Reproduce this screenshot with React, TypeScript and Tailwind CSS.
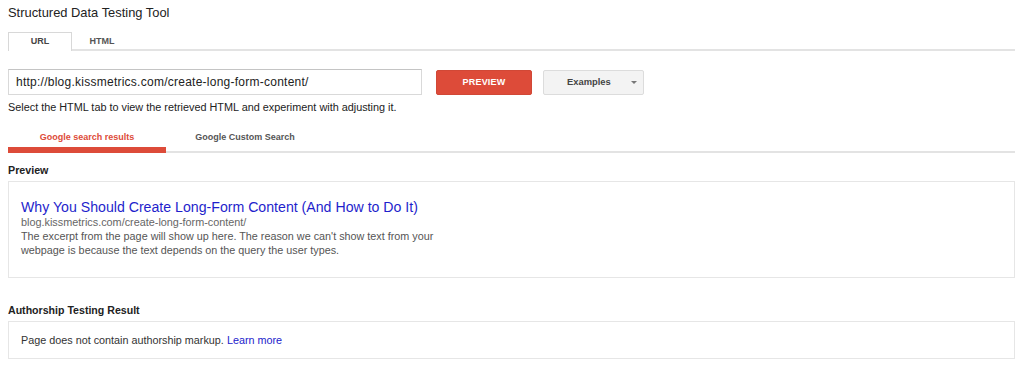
import React from "react";

export default function App() {
  return (
    <div
      className="w-[1024px] h-[373px] overflow-hidden bg-white pl-2 pr-[9px] text-[#222]"
      style={{ fontFamily: '"Liberation Sans", Arial, sans-serif' }}
    >
      {/* Title */}
      <div className="pt-[5px] text-[12.9px] leading-[16px] text-[#222]">
        Structured Data Testing Tool
      </div>

      {/* Top tabs */}
      <div className="mt-[11px] flex h-[19px] items-start border-b-2 border-[#e3e3e3]">
        <div className="-mb-[2px] flex h-[19px] w-[64px] items-center justify-center border border-b-0 border-[#d8d8d8] bg-white text-[9px] font-bold text-[#444]">
          URL
        </div>
        <div className="flex h-[17px] w-[60px] items-center justify-center pt-[2px] text-[9px] font-bold text-[#555]">
          HTML
        </div>
      </div>

      {/* Input row */}
      <div className="mt-[18px] flex items-start">
        <div className="flex h-[26px] w-[414px] items-center border border-[#d9d9d9] border-t-[#c4c4c4] pl-[7px] text-[12px] tracking-[0.25px] text-[#222]">
          http://blog.kissmetrics.com/create-long-form-content/
        </div>
        <div className="ml-[14px] mt-[1px] flex h-[25px] w-[96px] items-center justify-center rounded-[2px] border border-[#d14836] bg-[#dd4b39] text-[9px] font-bold tracking-[0.2px] text-white">
          PREVIEW
        </div>
        <div className="relative ml-[11px] mt-[1px] flex h-[25px] w-[101px] items-center rounded-[2px] border border-[#dcdcdc] bg-[#f3f3f3] pl-[23px] text-[9.4px] font-bold text-[#444]">
          Examples
          <span className="absolute right-[6px] top-[10px] h-0 w-0 border-x-[3px] border-t-[3px] border-x-transparent border-t-[#777]" />
        </div>
      </div>

      {/* Helper text */}
      <div className="mt-[6px] text-[10.85px] leading-[12px] text-[#222]">
        Select the HTML tab to view the retrieved HTML and experiment with adjusting it.
      </div>

      {/* Sub tabs */}
      <div className="mt-[16px] flex h-[24px] items-start border-b-2 border-[#e3e3e3]">
        <div className="-mb-[2px] flex h-[24px] w-[158px] items-center justify-center border-b-[6px] border-[#dd4b39] text-[9px] font-bold text-[#dd4b39]">
          Google search results
        </div>
        <div className="flex h-[18px] w-[158px] items-center justify-center text-[9px] font-bold text-[#555]">
          Google Custom Search
        </div>
      </div>

      {/* Preview */}
      <div className="mt-[10px] text-[10.7px] font-bold leading-[14px] text-[#222]">
        Preview
      </div>
      <div className="mt-[4px] h-[97px] border border-[#e6e6e6] pl-[12px] pt-[17px]">
        <div className="text-[14.15px] leading-[16px] text-[#1f1fcc]">
          Why You Should Create Long-Form Content (And How to Do It)
        </div>
        <div className="text-[10.85px] leading-[14px] text-[#666]">
          blog.kissmetrics.com/create-long-form-content/
        </div>
        <div className="w-[430px] text-[10.8px] leading-[14px] text-[#555]">
          The excerpt from the page will show up here. The reason we can't show text from your webpage is because the text depends on the query the user types.
        </div>
      </div>

      {/* Authorship */}
      <div className="mt-[25px] text-[10.6px] font-bold leading-[14px] text-[#222]">
        Authorship Testing Result
      </div>
      <div className="mt-[4px] flex h-[38px] items-center border border-[#e6e6e6] pl-[12px] text-[10.8px] leading-[14px] text-[#333]">
        <span>
          Page does not contain authorship markup.{" "}
          <span className="text-[#2222cc]">Learn more</span>
        </span>
      </div>
    </div>
  );
}
